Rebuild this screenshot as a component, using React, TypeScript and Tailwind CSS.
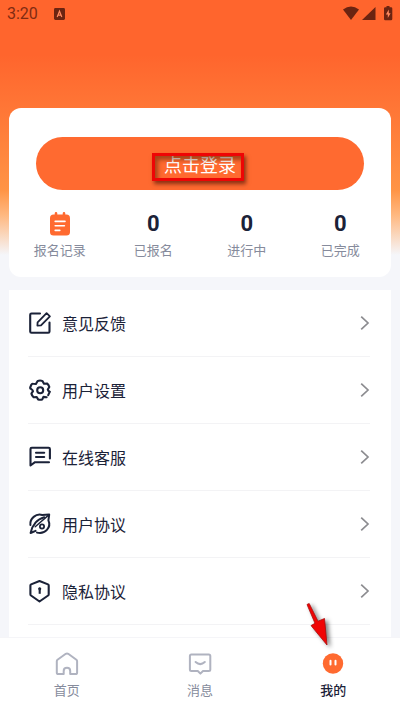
import React from 'react';

const stats = [
  { label: '已报名', value: 0 },
  { label: '进行中', value: 0 },
  { label: '已完成', value: 0 },
];

const menuItems = [
  { id: 'feedback', label: '意见反馈', icon: FeedbackIcon },
  { id: 'settings', label: '用户设置', icon: SettingsIcon },
  { id: 'service', label: '在线客服', icon: ServiceIcon },
  { id: 'agreement', label: '用户协议', icon: AgreementIcon },
  { id: 'privacy', label: '隐私协议', icon: PrivacyIcon },
];

const tabs = [
  { id: 'home', label: '首页', icon: HomeIcon },
  { id: 'message', label: '消息', icon: MessageIcon },
  { id: 'mine', label: '我的', icon: MineIcon },
];

const lineProps = {
  viewBox: '0 0 24 24',
  fill: 'none',
  stroke: 'currentColor',
  strokeWidth: 2.1,
  strokeLinecap: 'round' as const,
  strokeLinejoin: 'round' as const,
  className: 'h-6 w-6 shrink-0',
  'aria-hidden': true,
};

function FeedbackIcon() {
  return (
    <svg {...lineProps}>
      <path d="M12 2.5H3.5Q2.2 2.5 2.2 3.8V20.4Q2.2 21.7 3.5 21.7H20.2Q21.5 21.7 21.5 20.4V11.5" />
      <path d="M18.6 2.2 21.9 5.3 13 14.4 9.4 14.7 9.6 11.3Z" strokeWidth="1.8" />
    </svg>
  );
}

function SettingsIcon() {
  return (
    <svg {...lineProps}>
      <path d="M18.6 19.2 15.4 18.9 14.3 21.4Q12.2 22 10.1 21.4L8.7 19 5.6 19.3Q4 17.8 3.4 15.6L5 13.1Q4.8 11.8 3 10.8 1.8 10.4 2.3 9.3L3.2 7Q3.8 5.6 5.1 5.8L7.9 6 9.5 3.2Q12 1.8 14.6 3.2L16 5.8 19 5.5Q20.4 6.4 21.3 8.9L19.8 11.5Q20 13 21.5 13.6" />
      <path d="M21.7 13.8 20.2 17.2" />
      <circle cx="12.2" cy="12.2" r="3" />
    </svg>
  );
}

function ServiceIcon() {
  return (
    <svg {...lineProps}>
      <path d="M21.9 13.5V4Q21.9 2.7 20.6 2.7H3.8Q2.5 2.7 2.5 4V20.5L7 17.2H21" />
      <path d="M8 7.8H16.2M8 12H16.2" />
    </svg>
  );
}

function AgreementIcon() {
  return (
    <svg {...lineProps} strokeWidth={2}>
      <path d="M2.4 13C1.6 6.5 8 1.2 14.2 3L21.2 2.6 20.4 8.4C23.6 15.5 17 22.6 9 20.6" />
      <path d="M16.2 5.2C9.5 7 4.2 13 2.6 21L7.6 18.8" />
      <path d="M7.2 14.8 20 3.6" strokeWidth="1.4" />
      <circle cx="14" cy="14.4" r="2.1" strokeWidth="1.8" />
    </svg>
  );
}

function PrivacyIcon() {
  return (
    <svg {...lineProps}>
      <path d="M11.5 2 20 5.4Q20.7 5.7 20.7 6.5V15.2Q20.7 16 20.1 16.5L11.5 22.5 3 16.5Q2.4 16 2.4 15.2V6.5Q2.4 5.7 3.1 5.4Z" />
      <path d="M11.7 11V14.8" strokeLinecap="butt" />
      <circle cx="11.7" cy="9.8" r="1" fill="currentColor" strokeWidth="1.2" />
    </svg>
  );
}

function HomeIcon() {
  return (
    <svg {...lineProps}>
      <path d="M8.7 22H3.4Q1.8 22 1.8 20.4V9.3Q1.8 8.4 2.5 7.8L10.8 1.8Q12 1 13.2 1.8L21.4 7.8Q22.1 8.4 22.1 9.3V20.4Q22.1 22 20.5 22H15.2V19Q15.2 15.8 12 15.8 8.7 15.8 8.7 19Z" strokeWidth="2" />
    </svg>
  );
}

function MessageIcon() {
  return (
    <svg {...lineProps}>
      <path d="M3.4 2.5H20.8Q22.3 2.5 22.3 4V17.5Q22.3 19 20.8 19H15L12.4 21.6 9.8 19H3.4Q1.9 19 1.9 17.5V4Q1.9 2.5 3.4 2.5Z" strokeWidth="2" />
      <path d="M7.6 10Q12.2 14.2 16.8 10" strokeWidth="2" />
    </svg>
  );
}

function MineIcon() {
  return (
    <svg viewBox="0 0 24 24" className="h-6 w-6" aria-hidden="true">
      <circle cx="12" cy="11.5" r="10.2" fill="#ff6a30" />
      <path d="M9.5 8.8V12.4M14.5 8.8V12.4" stroke="#fff" strokeWidth="2" strokeLinecap="round" />
    </svg>
  );
}

function RecordIcon() {
  return (
    <svg viewBox="0 0 20 24" className="h-6 w-5" aria-hidden="true">
      <rect x="0" y="2.6" width="20" height="21" rx="3.6" fill="#ff6a30" />
      <path d="M6 1.4V4M14 1.4V4" stroke="#ff6a30" strokeWidth="2.6" strokeLinecap="round" />
      <path d="M5.2 9.4H15M5.2 13.8H14.4M5.2 18.4H9.8" stroke="#fff" strokeWidth="1.6" strokeLinecap="round" />
    </svg>
  );
}

function ArrowRight() {
  return (
    <svg viewBox="0 0 10 16" className="h-4 w-[10px]" fill="none" stroke="#8c8c90" strokeWidth="1.7" aria-hidden="true">
      <path d="M1.2 1.6 8 8 1.2 14.4" />
    </svg>
  );
}

function StatusBar() {
  return (
    <div className="flex h-7 items-center justify-between px-[7px] text-[#7f2b12]">
      <div className="flex items-center gap-4">
        <span className="font-['Roboto',sans-serif] text-base leading-7">3:20</span>
        <svg viewBox="0 0 11 12" className="h-3 w-[11px]" aria-hidden="true">
          <rect width="11" height="12" rx="1.4" fill="#6b2411" />
          <path d="M3.2 9 5.5 3.2 7.8 9M4 7.2H7" fill="none" stroke="#ff8a60" strokeWidth="1.2" />
        </svg>
      </div>
      <svg viewBox="0 0 50 16" className="h-4 w-[50px] text-[#6b2411]" fill="currentColor" aria-hidden="true">
        <path d="M0 3.6Q8 -2.8 16 3.6L8 14Z" />
        <path d="M32.5 1V14H19Z" />
        <path d="M43.5 0H46.5V1.2H48Q49.3 1.2 49.3 2.5V13Q49.3 14.3 48 14.3H42.3Q41 14.3 41 13V2.5Q41 1.2 42.3 1.2H43.5Z" />
        <path d="M45.8 3.6 42.9 8.4H44.8V12L47.6 7.2H45.8Z" fill="#ff8a60" />
      </svg>
    </div>
  );
}

export default function App() {
  const activeTab = 'mine';

  return (
    <div className="flex h-screen flex-col overflow-hidden bg-[#f5f6fa] font-['Noto_Sans_CJK_SC',sans-serif] text-[#1b2238]">
      <main className="flex min-h-0 flex-1 flex-col overflow-hidden bg-[linear-gradient(180deg,#ff652d_0px,#ff652d_55px,#ff7a38_120px,#ff9445_190px,#ffb880_215px,#f5f6fa_255px)]">
        <StatusBar />

        {/* Login card */}
        <section className="mx-[9px] mt-20 shrink-0 rounded-xl bg-white pb-[17px] pt-[29px]">
          <div className="px-[27px]">
            <button type="button" className="relative block h-[53px] w-full rounded-full bg-[#ff6a30] text-lg text-white">
              点击登录
              <span className="absolute left-1/2 top-4 -ml-12 h-7 w-[92px] border-[3px] border-[#ee0505] shadow-[2px_3px_4px_rgba(60,10,0,0.6),inset_3px_4px_4px_rgba(80,30,0,0.5)]" />
            </button>
          </div>

          <div className="mt-5 grid grid-cols-4 px-1 text-center">
            <button type="button" className="flex flex-col items-center">
              <span className="flex h-7 items-center">
                <RecordIcon />
              </span>
              <span className="mt-0.5 text-[13px] leading-5 text-[#868b9c]">报名记录</span>
            </button>
            {stats.map((stat) => (
              <button type="button" key={stat.label} className="flex flex-col items-center">
                <span className="font-['Roboto',sans-serif] text-[22px] font-bold leading-7">{stat.value}</span>
                <span className="mt-0.5 text-[13px] leading-5 text-[#868b9c]">{stat.label}</span>
              </button>
            ))}
          </div>
        </section>

        {/* Menu */}
        <section className="mx-[9px] mt-[13px] flex-1 bg-white pl-[19px] pr-[21px]">
          {menuItems.map((item) => {
            const Icon = item.icon;
            return (
              <button
                key={item.id}
                type="button"
                className="flex h-[67px] w-full items-center border-b border-[#f3f3f5] text-left"
              >
                <Icon />
                <span className="ml-[10px] flex-1 text-base">{item.label}</span>
                <ArrowRight />
              </button>
            );
          })}
        </section>
      </main>

      {/* Bottom tabs */}
      <nav className="relative grid h-[74px] shrink-0 grid-cols-3 border-t border-[#f5f5f8] bg-white">
        {tabs.map((tab) => {
          const Icon = tab.icon;
          return (
            <button
              key={tab.id}
              type="button"
              className={`flex flex-col items-center pt-[14px] ${
                tab.id === activeTab ? 'font-medium text-[#1b2238]' : 'text-[#b0b3c0]'
              }`}
            >
              <Icon />
              <span className={`mt-1 text-[13px] leading-5 ${tab.id === activeTab ? '' : 'text-[#868b9c]'}`}>
                {tab.label}
              </span>
            </button>
          );
        })}
        <svg
          viewBox="0 0 30 48"
          className="pointer-events-none absolute -top-9 right-[67px] h-12 w-[30px] drop-shadow-[3px_2px_2px_rgba(0,0,0,0.5)]"
          aria-hidden="true"
        >
          <path d="M4 2.5 6.2 1.5 15 19.2 21.5 16.5 24 43 8 23.6 12 21.3Z" fill="#f00505" stroke="#a80c0c" strokeWidth="0.8" />
        </svg>
      </nav>
    </div>
  );
}
